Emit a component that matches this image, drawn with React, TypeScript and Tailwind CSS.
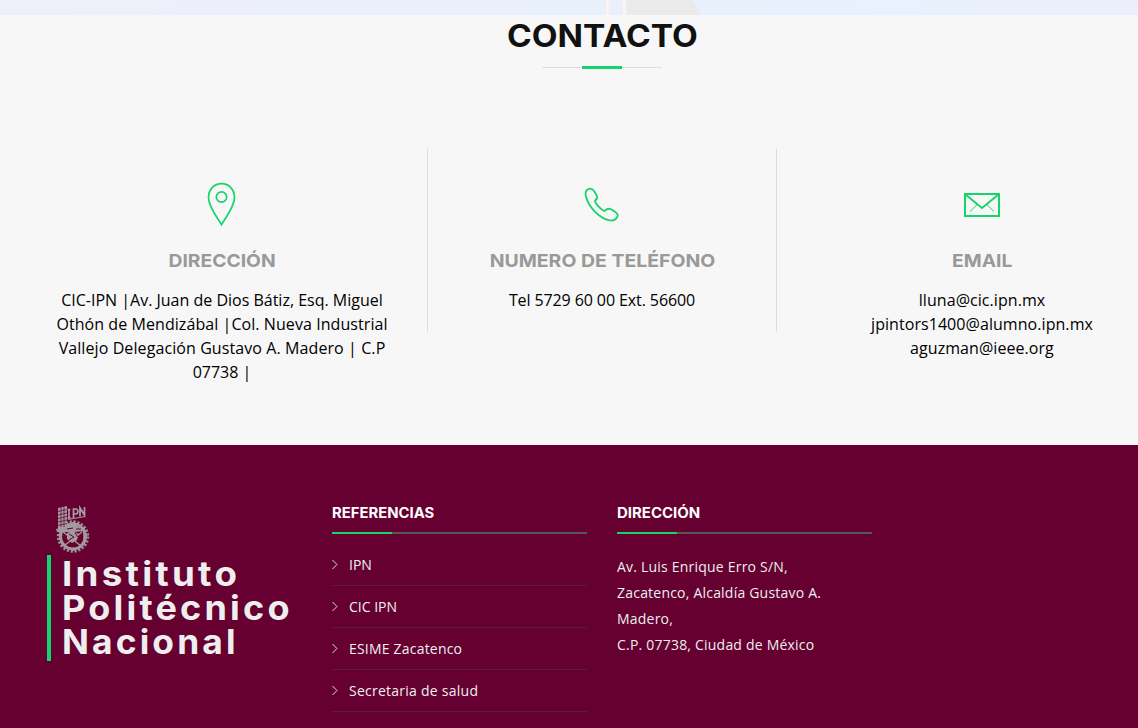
import type { ReactNode } from "react";

const heading = "font-['Inter',sans-serif] font-bold whitespace-nowrap";

function PinIcon() {
  return (
    <svg width="30" height="46" viewBox="0.5 0 30 46" fill="none" stroke="#16d46c" strokeWidth="1.7">
      <path d="M15 42.7C11.5 36.5 2 25 2 15.5C2 7.5 7.5 1.7 15 1.7S28 7.5 28 15.5C28 25 18.5 36.5 15 42.7Z" />
      <circle cx="15" cy="15" r="5.2" />
    </svg>
  );
}

function PhoneIcon() {
  return (
    <svg width="36" height="46" viewBox="0.5 0.2 36 46" fill="none" stroke="#16d46c" strokeWidth="1.8" strokeLinejoin="round">
      <path d="M4 7.7C6.5 6.1 8.8 6.8 10.5 9.3L13 13.3C14.3 15.6 13.8 17.3 11.5 18.7C11.1 21.2 17.9 28.2 21 29.4C23.2 26.6 24.9 26.2 27.4 27.5L31.2 29.7C34.3 31.6 35 33.6 33.2 36C31.4 38.7 28.8 39.4 25 38.4C15 35.8 5 24.8 2.5 15C1.6 11.5 2.1 9.1 4 7.7Z" />
    </svg>
  );
}

function MailIcon() {
  return (
    <svg width="36" height="46" viewBox="0 0 36 46" fill="none" stroke="#16d46c">
      <rect x="1" y="11" width="34" height="22" strokeWidth="2" transform="translate(0 1)" />
      <path d="M1.5 12.5L18 26L34.5 12.5" strokeWidth="1.9" />
      <path d="M13.5 22.2L6 29.5M22.5 22.2L30 29.5" strokeWidth="1" />
    </svg>
  );
}

function Emblem() {
  return (
    <svg width="38" height="50" viewBox="0 0 38 50" fill="none" className="ml-[7px] block">
      <circle cx="19" cy="31.5" r="14.7" stroke="#9d8c95" strokeWidth="3" strokeDasharray="2.2 1.65" />
      <circle cx="19" cy="31.5" r="12.4" stroke="#a39aa0" strokeWidth="3" />
      <path d="M4 3L13 1V24H4Z" fill="#a39aa0" />
      <path d="M4 6.5L13 4.5M4 10L13 8M4 13.5L13 11.5M4 17L13 15M4 20.5L13 18.5M7 2V22M10 2V22" stroke="#650030" strokeWidth=".7" />
      <path d="M15 4V13M13.5 4.5H16.5M13.5 13H17M19.5 13V4H22Q24 4.5 24 6.5T22 9H19.5M26 11.5V3L30.5 10V2" stroke="#aaa1a6" strokeWidth="1.7" />
      <path d="M14 14.5L31 11.5" stroke="#a39aa0" strokeWidth="1.2" />
      <path d="M2 24L14 21L20 16L24 22L31 23V26L20 27L3 27Z" fill="#a39aa0" />
      <path d="M6 27V34Q8 43 19 45Q29 42 30 34V26M8 26L27 41M28 27L11 40" stroke="#a39aa0" strokeWidth="1.4" />
      <path d="M13 28L18 26L25 29L23 35L18 38L13 34Z" fill="#a39aa0" />
      <path d="M15 29L20 32L15 35M21 28L24 32M13 24L19 23M22 24H27" stroke="#650030" strokeWidth="1" />
    </svg>
  );
}

function Contact({ icon, title, children, middle = false }: { icon: ReactNode; title: ReactNode; children: ReactNode; middle?: boolean }) {
  return (
    <div className={"mx-[15px] w-[350px] shrink-0 text-center " + (middle ? "h-[183px] border-x border-[#dcdcdc]" : "")}>
      <div className="mt-[33px] flex h-[46px] justify-center">{icon}</div>
      <h3 className={heading + " mt-[21px] h-6 text-[18px] leading-6 text-[#999999]"}>{title}</h3>
      <div className="mt-[15px] text-base leading-6 text-black">{children}</div>
    </div>
  );
}

function FooterTitle({ children }: { children: ReactNode }) {
  return (
    <div>
      <h4 className={heading + " h-[29px] text-[14px] leading-5 text-white"}>{children}</h4>
      <div className="h-0.5 bg-[#585858]">
        <div className="h-full w-[60px] bg-[#16d46c]" />
      </div>
    </div>
  );
}

const links = [
  { label: "IPN", tracking: "" },
  { label: "CIC IPN", tracking: "" },
  { label: "ESIME Zacatenco", tracking: "tracking-[0.2px]" },
  { label: "Secretaria de salud", tracking: "tracking-[0.25px]" },
];

export default function App() {
  return (
    <div className="h-[728px] w-full overflow-hidden bg-[#f7f7f7] font-['Open_Sans',sans-serif]">
      <div className="h-[15px] bg-[linear-gradient(90deg,#efeffb,#e8f0fc_50%,#e8f1fd_80%,#eceefb)]">
        <svg className="block" width="1138" height="15">
          <path d="M626 0H692L701 15H626Z" fill="#e9eae9" />
          <path d="M607.5 0V15M624 0V15" stroke="#f2edf5" strokeWidth="6" />
          <path d="M607.5 0V15M624 0V15" stroke="#fcf5f5" strokeWidth="2.5" />
        </svg>
      </div>
      <main className="ml-8 h-[430px] w-[1140px]">
        <h2 className={heading + " flex h-10 justify-center pt-px text-[31px] leading-10 text-[#111111]"}>
          <span className="scale-x-[1.08]">CONTACTO</span>
        </h2>
        <div className="mx-auto mt-[11px] flex h-[3px] w-[120px] items-center">
          <div className="h-px w-10 bg-[#dddddd]" />
          <div className="h-[3px] w-10 bg-[#16d46c]" />
          <div className="h-px w-10 bg-[#dddddd]" />
        </div>
        <section className="mt-20 flex">
          <Contact icon={<PinIcon />} title={<span className="inline-block scale-x-[1.07]">DIRECCIÓN</span>}>
            <p>
              CIC-IPN |Av. Juan de Dios Bátiz, Esq. Miguel<br />
              <span className="tracking-[0.07px]">Othón de Mendizábal |Col. Nueva Industrial</span><br />
              <span className="tracking-[0.09px]">Vallejo Delegación Gustavo A. Madero | C.P</span><br />
              07738 |
            </p>
          </Contact>
          <Contact middle icon={<PhoneIcon />} title={<span className="inline-block scale-x-[1.08]">NUMERO DE TELÉFONO</span>}>
            <p className="tracking-[-0.1px]">Tel 5729 60 00 Ext. 56600</p>
          </Contact>
          <Contact icon={<MailIcon />} title={<span className="inline-block scale-x-[1.07]">EMAIL</span>}>
            <p className="tracking-[0.06px]">lluna@cic.ipn.mx<br />jpintors1400@alumno.ipn.mx<br />aguzman@ieee.org</p>
          </Contact>
        </section>
      </main>
      <footer className="flex h-[283px] gap-[30px] bg-[#650030] pl-[47px]">
        <div className="w-[255px] shrink-0 pt-[60px]">
          <Emblem />
          <div className={heading + " h-[106px] border-l-4 border-[#16d46c] pl-[11px] pt-[2px] text-[34px] leading-[34px] tracking-[3px] text-[#eeeeee]"}>
            <div className="origin-left scale-x-[1.08]">Instituto</div>
            <div className="origin-left scale-x-[1.06]">Politécnico</div>
            <div className="origin-left scale-x-[1.04]">Nacional</div>
          </div>
        </div>
        <div className="w-[255px] shrink-0 pt-[58px]">
          <FooterTitle><span className="inline-block origin-left scale-x-[1.06]">REFERENCIAS</span></FooterTitle>
          <ul className="mt-[10px]">
            {links.map(({ label, tracking }) => (
              <li key={label} className="flex h-[42px] items-center border-b border-[#52223a] text-[14px] text-[#f0f0f0]">
                <svg width="17" height="11" viewBox="0 0 17 11" fill="none" stroke="#dddddd" strokeWidth="1">
                  <path d="M.5 1L5 5.5L.5 10" />
                </svg>
                <span className={tracking}>{label}</span>
              </li>
            ))}
          </ul>
        </div>
        <div className="w-[255px] shrink-0 pt-[58px]">
          <FooterTitle><span className="inline-block origin-left scale-x-[1.07]">DIRECCIÓN</span></FooterTitle>
          <p className="mt-5 text-[14px] leading-[26px] tracking-[0.21px] text-[#eeeeee]">
            Av. Luis Enrique Erro S/N,<br />Zacatenco, Alcaldía Gustavo A.<br />Madero,<br />C.P. 07738, Ciudad de México
          </p>
        </div>
      </footer>
    </div>
  );
}
